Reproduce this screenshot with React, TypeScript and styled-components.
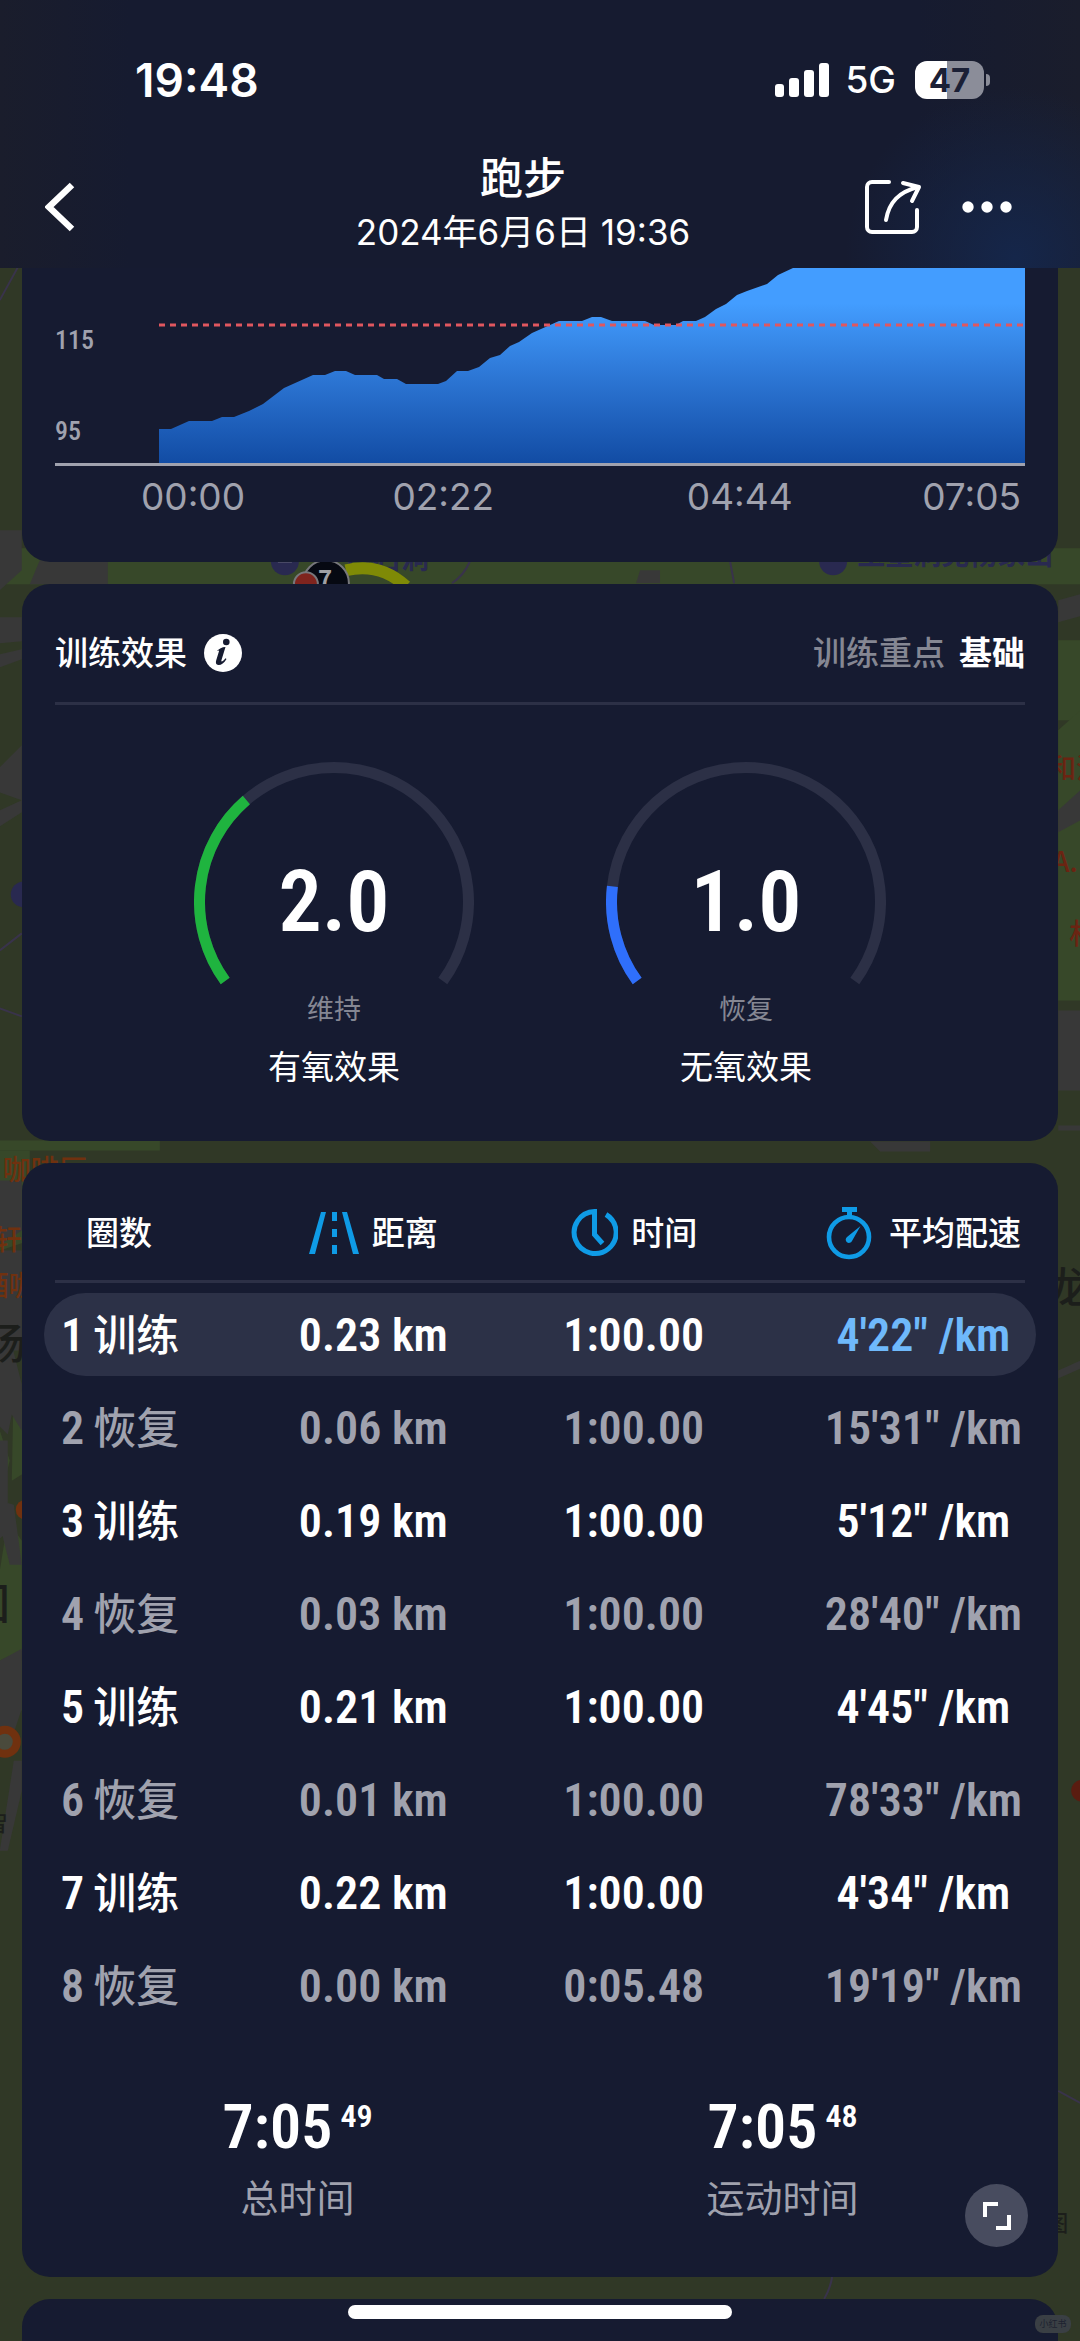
import React from "react";
import styled, { createGlobalStyle } from "styled-components";

const color = {
  page: "#303826",
  card: "#161b31",
  line: "#2c3046",
  pill: "#2c3147",
  text: "#ffffff",
  muted: "#a0a2ae",
  faint: "#858793",
  accent: "#0f9be6",
  pace: "#6fb9fb",
};

const sans = `Inter, "Noto Sans CJK SC", sans-serif`;
const narrow = `"Noto Sans ExtraCondensed", "Liberation Sans Narrow", "Roboto Condensed", Roboto, "Noto Sans CJK SC", sans-serif`;

const GlobalStyle = createGlobalStyle`
  * { box-sizing: border-box; }
  body {
    margin: 0;
    background: ${color.page};
    color: ${color.text};
    font-family: ${sans};
  }
  button {
    border: 0;
    padding: 0;
    background: none;
    color: inherit;
    display: flex;
    align-items: center;
    justify-content: center;
  }
`;

const Screen = styled.div`
  position: relative;
  min-height: 100vh;
  display: flex;
  flex-direction: column;
  overflow: hidden;
  isolation: isolate;
`;

const MapLayer = styled.svg`
  position: absolute;
  inset: 0;
  width: 100%;
  height: 100%;
  z-index: -1;
  font-family: "Noto Sans CJK SC", sans-serif;
`;

/* ---------- header ---------- */

const Header = styled.header`
  background:
    radial-gradient(circle at 94% 96%, #15264a 0, transparent 170px),
    linear-gradient(90deg, #1a1d2c 0, #161b30 12%, #161b30 85%, #1a1d2c 100%);
`;

const StatusBar = styled.div`
  display: flex;
  justify-content: space-between;
  align-items: center;
  height: 140px;
  padding: 20px 90px 0 135px;
`;

const Clock = styled.time`
  font-size: 46px;
  font-weight: 600;
  line-height: 56px;
`;

const StatusIcons = styled.div`
  display: flex;
  align-items: center;
`;

const Network = styled.span`
  margin: 0 19px 0 16px;
  font-size: 37px;
  font-weight: 500;
  line-height: 44px;
`;

const Battery = styled.span`
  width: 69px;
  height: 38px;
  border-radius: 12px;
  background: linear-gradient(90deg, #ffffff 47%, #8b8d99 47%);
  color: #1b2036;
  font-size: 33px;
  font-weight: 700;
  line-height: 38px;
  text-align: center;
`;

const BatteryTip = styled.span`
  width: 4px;
  height: 12px;
  margin-left: 2px;
  border-radius: 0 6px 6px 0;
  background: #8b8d99;
`;

const NavBar = styled.nav`
  display: grid;
  grid-template-columns: 180px 1fr 214px;
  height: 128px;
  align-items: center;
`;

const BackButton = styled.button`
  width: 60px;
  height: 60px;
  margin: 6px 0 0 30px;
`;

const TitleBlock = styled.div`
  padding-bottom: 4px;
  text-align: center;
`;

const Title = styled.h1`
  margin: 0;
  font-size: 43px;
  font-weight: 500;
  line-height: 56px;
`;

const Subtitle = styled.p`
  margin: 4px 0 0;
  font-size: 35px;
  line-height: 44px;
  white-space: nowrap;
`;

const Actions = styled.div`
  display: flex;
  justify-content: flex-end;
  gap: 40px;
  padding: 6px 68px 0 0;
`;

/* ---------- cards ---------- */

const Card = styled.section`
  margin: 0 22px 22px;
  border-radius: 28px;
  background: ${color.card};
`;

const ChartCard = styled(Card)`
  border-radius: 0 0 28px 28px;
  padding: 0 33px 43px;
`;

const PlotRow = styled.div`
  display: grid;
  grid-template-columns: 104px 1fr;
  border-bottom: 3px solid ${color.muted};
`;

const YAxis = styled.div`
  display: flex;
  flex-direction: column;
  justify-content: flex-end;
  gap: 63px;
  padding-bottom: 18px;
  color: ${color.muted};
  font-family: ${narrow};
  font-size: 26px;
  font-weight: 500;
  line-height: 28px;
`;

const Plot = styled.svg`
  display: block;
  width: 100%;
  height: 195px;
`;

const XAxis = styled.div`
  display: grid;
  grid-template-columns: 251fr 294fr 235fr auto;
  padding: 9px 4px 0 86px;
  color: ${color.muted};
  font-size: 37px;
  line-height: 44px;
`;

const EffectCard = styled(Card)`
  padding: 0 33px 50px;
`;

const CardHeader = styled.div`
  display: flex;
  justify-content: space-between;
  align-items: center;
  height: 121px;
  padding-top: 19px;
  border-bottom: 3px solid ${color.line};
  font-size: 33px;
`;

const CardTitle = styled.h2`
  display: flex;
  align-items: center;
  gap: 17px;
  margin: 0;
  font-size: 33px;
  font-weight: 500;
  line-height: 48px;
`;

const Focus = styled.p`
  display: flex;
  gap: 14px;
  margin: 0;
  color: ${color.faint};
  font-weight: 500;
  line-height: 48px;

  strong {
    color: ${color.text};
    font-weight: 700;
  }
`;

const Gauges = styled.div`
  display: flex;
  justify-content: center;
  gap: 132px;
  padding-top: 57px;
`;

const GaugeItem = styled.figure`
  width: 280px;
  margin: 0;
  text-align: center;
`;

const Dial = styled.div`
  display: grid;
  height: 226px;

  > * {
    grid-area: 1 / 1;
  }
`;

const DialValue = styled.span`
  align-self: center;
  padding-top: 54px;
  font-family: ${narrow};
  font-size: 86px;
  font-weight: 600;
  line-height: 96px;
`;

const DialLevel = styled.p`
  margin: 0;
  padding-top: 2px;
  color: ${color.faint};
  font-size: 27px;
  line-height: 40px;
`;

const DialCaption = styled.figcaption`
  margin-top: 13px;
  font-size: 33px;
  line-height: 48px;
`;

/* ---------- laps ---------- */

const LapCard = styled(Card)`
  padding: 0 22px 51px;
`;

const LapTable = styled.table`
  width: 100%;
  table-layout: fixed;
  border-collapse: separate;
  border-spacing: 0 10px;
`;

const LapHead = styled.thead`
  tr {
    position: relative;
  }

  tr::after {
    content: "";
    position: absolute;
    left: 11px;
    right: 11px;
    bottom: 0;
    height: 3px;
    background: ${color.line};
  }
`;

const HeadCell = styled.th<{ $width: string; $start?: boolean }>`
  width: ${(p) => p.$width};
  height: 110px;
  padding: ${(p) => (p.$start ? "10px 0 0 42px" : "10px 0 0")};
  text-align: ${(p) => (p.$start ? "left" : "center")};
  font-size: 33px;
  font-weight: 500;
  line-height: 48px;
  white-space: nowrap;
`;

const HeadLabel = styled.span<{ $gap: number }>`
  display: flex;
  align-items: center;
  justify-content: center;
  gap: ${(p) => p.$gap}px;
`;

const LapRow = styled.tr<{ $rest: boolean; $best: boolean }>`
  color: ${(p) => (p.$rest ? color.muted : color.text)};

  td {
    height: 83px;
    padding: 0;
    background: ${(p) => (p.$best ? color.pill : "transparent")};
    font-family: ${narrow};
    font-size: 46px;
    font-weight: 600;
    line-height: 56px;
    text-align: center;
    white-space: nowrap;
  }

  td:first-child {
    padding-left: 17px;
    border-radius: 42px 0 0 42px;
    text-align: left;
  }

  td:last-child {
    border-radius: 0 42px 42px 0;
    color: ${(p) => (p.$best ? color.pace : "inherit")};
  }
`;

const LapKind = styled.span`
  margin-left: 9px;
  font-family: ${sans};
  font-size: 43px;
  font-weight: 500;
`;

const Totals = styled.dl`
  display: grid;
  grid-template-columns: 1fr 1fr;
  margin: 0;
  padding: 54px 11px 0;
  text-align: center;
`;

const Total = styled.div`
  display: flex;
  flex-direction: column-reverse;
`;

const TotalValue = styled.dd`
  display: flex;
  justify-content: center;
  gap: 8px;
  margin: 0;
  font-family: ${narrow};
  font-size: 62px;
  font-weight: 600;
  line-height: 72px;

  small {
    font-size: 32px;
    line-height: 50px;
  }
`;

const TotalLabel = styled.dt`
  margin-top: 7px;
  color: ${color.muted};
  font-size: 38px;
  font-weight: 400;
  line-height: 56px;
`;

const NextCard = styled(Card)`
  flex: 1;
  min-height: 43px;
  margin-bottom: 0;
  border-radius: 28px 28px 0 0;
`;

const ExpandButton = styled.button`
  position: fixed;
  right: 52px;
  bottom: 94px;
  width: 63px;
  height: 63px;
  border-radius: 50%;
  background: #484c5f;
`;

const HomeIndicator = styled.div`
  position: fixed;
  left: 50%;
  bottom: 22px;
  width: 384px;
  height: 14px;
  border-radius: 7px;
  background: #ffffff;
  transform: translateX(-50%);
`;

const Watermark = styled.span`
  position: fixed;
  right: 9px;
  bottom: 8px;
  width: 36px;
  border-radius: 8px;
  background: #3a3f44;
  color: #1d2230;
  font-size: 9px;
  line-height: 18px;
  text-align: center;
`;

/* ---------- data ---------- */

const laps = [
  { kind: "训练", distance: "0.23", time: "1:00.00", pace: `4'22"` },
  { kind: "恢复", distance: "0.06", time: "1:00.00", pace: `15'31"` },
  { kind: "训练", distance: "0.19", time: "1:00.00", pace: `5'12"` },
  { kind: "恢复", distance: "0.03", time: "1:00.00", pace: `28'40"` },
  { kind: "训练", distance: "0.21", time: "1:00.00", pace: `4'45"` },
  { kind: "恢复", distance: "0.01", time: "1:00.00", pace: `78'33"` },
  { kind: "训练", distance: "0.22", time: "1:00.00", pace: `4'34"` },
  { kind: "恢复", distance: "0.00", time: "0:05.48", pace: `19'19"` },
];

const heartRate =
  "0,161 12,161 30,153 53,153 63,149 75,149 90,143 104,136 125,120 154,107 166,107 176,103 187,103 196,107 218,107 225,111 238,111 247,116 279,116 287,113 298,103 309,103 320,99 331,90 341,87 351,78 360,74 373,65 400,53 423,53 433,49 442,49 453,53 486,53 495,57 517,57 524,53 537,53 546,49 557,41 567,36 578,27 588,23 608,16 619,7 634,0";

/* ---------- drawings ---------- */

const SignalIcon = () => (
  <svg width="54" height="34" viewBox="0 0 54 34" fill="#fff" aria-hidden="true">
    <rect x="0" y="21" width="9" height="13" rx="3" />
    <rect x="14" y="15" width="10" height="19" rx="3" />
    <rect x="29" y="7" width="10" height="27" rx="3" />
    <rect x="44" y="0" width="10" height="34" rx="3" />
  </svg>
);

const BackIcon = () => (
  <svg width="30" height="50" viewBox="0 0 30 50" fill="none" aria-hidden="true">
    <path d="M27 3 4 25l23 22" stroke="#fff" strokeWidth="6.5" />
  </svg>
);

const ShareIcon = () => (
  <svg width="58" height="56" viewBox="0 0 58 56" fill="none" stroke="#fff" strokeWidth="4" strokeLinecap="round" strokeLinejoin="round" aria-hidden="true">
    <path d="M25 3H8a5 5 0 0 0-5 5v40a5 5 0 0 0 5 5h40a5 5 0 0 0 5-5V31" />
    <path d="M22 41c3-18 13-28 32-33" />
    <path d="M39 4l16 4-7 14" />
  </svg>
);

const MoreIcon = () => (
  <svg width="50" height="56" viewBox="0 0 50 56" fill="#fff" aria-hidden="true">
    <circle cx="6" cy="28" r="5.7" />
    <circle cx="25" cy="28" r="5.7" />
    <circle cx="44" cy="28" r="5.7" />
  </svg>
);

const InfoIcon = () => (
  <svg width="38" height="38" viewBox="0 0 38 38" aria-hidden="true">
    <circle cx="19" cy="19" r="19" fill="#fff" />
    <circle cx="22.3" cy="8" r="3.3" fill={color.card} />
    <path d="M13 17c2-2 5-4 8.500-4l-4 13c-.7 2.400 1 1.800 4-1.800l1 .8c-2.500 4.200-5.500 6.200-8 6-2.600-.2-3-2.400-2.200-5l2.600-8.400c.5-1.600-.3-1.400-1.500-.6z" fill={color.card} />
  </svg>
);

const RoadIcon = () => (
  <svg width="50" height="42" viewBox="0 0 50 42" fill={color.accent} aria-hidden="true">
    <path d="M12 0h5L6 42H0zM33 0h5l12 42h-6zM23 0h5v9h-5zM23 17h5v8h-5zM23 33h5v9h-5z" />
  </svg>
);

const ClockIcon = () => (
  <svg width="48" height="50" viewBox="0 0 48 50" fill="none" stroke={color.accent} strokeWidth="5" aria-hidden="true">
    <path d="M36 6.500A21 21 0 1 1 24.500 3.500v23l8 9" />
  </svg>
);

const StopwatchIcon = () => (
  <svg width="46" height="53" viewBox="0 0 46 53" aria-hidden="true">
    <circle cx="23" cy="30" r="20" fill="none" stroke={color.accent} strokeWidth="4.600" />
    <path d="M16 0h15v5h-5v6h-5V5h-5z" fill={color.accent} />
    <path d="M34.500 19 26 34a3.300 3.300 0 1 1-5-4z" fill={color.accent} />
  </svg>
);

const ExpandIcon = () => (
  <svg width="30" height="30" viewBox="0 0 30 30" fill="none" stroke="#fff" strokeWidth="4" aria-hidden="true">
    <path d="M3 16V3h13M27 14v13H14" />
  </svg>
);

const polar = (angle: number) => {
  const rad = (angle * Math.PI) / 180;
  return `${140 - 134.5 * Math.cos(rad)} ${140 - 134.5 * Math.sin(rad)}`;
};

const arc = (sweep: number) =>
  `M${polar(-36)}A134.5 134.5 0 ${sweep > 180 ? 1 : 0} 1 ${polar(sweep - 36)}`;

type GaugeProps = { value: number; stroke: string; level: string; label: string };

const Gauge = ({ value, stroke, level, label }: GaugeProps) => (
  <GaugeItem>
    <Dial>
      <svg width="280" height="226" viewBox="0 0 280 226" fill="none" strokeWidth="11" aria-hidden="true">
        <path d={arc(252)} stroke={color.line} />
        <path d={arc((value / 6) * 256)} stroke={stroke} />
      </svg>
      <DialValue>{value.toFixed(1)}</DialValue>
    </Dial>
    <DialLevel>{level}</DialLevel>
    <DialCaption>{label}</DialCaption>
  </GaugeItem>
);

const MapBackdrop = () => (
  <MapLayer viewBox="0 0 1080 2341" preserveAspectRatio="xMidYMin slice" aria-hidden="true">
    <g fill="#374829">
      <path d="M0 548h1080v36H0zM1058 640h22v80h-22zM0 1140h160v10H0z" />
      <path d="M1058 730l22-20v290h-22zM0 1150h30v90l-30 10zM14 1380l14 20v70l-16 10zM0 1430l10 30-10 40zM8 1520l14 20v110l-22 10v-90zM0 1660h22v50H0z" />
    </g>
    <g fill="#383838">
      <path d="M0 530h22v40l-22 20zM40 560h68v24H30zM0 617h22v24l-22 2zM0 654l22-5v10l-22 8zM22 745v55l-22-8v-25zM0 810l22-10v12L0 826z" />
      <path d="M0 1180h22v50l-22 15zM0 1250h22v100H0zM0 1350l12-6 10 40v46l-10-16-4 20-8-8zM0 1440h8v90l-8 8zM0 1500l14 4 8 60H10l-10-40zM0 1660l22-12v60l-10 30H0zM14 1760h8v30l-14 60H0z" />
      <path d="M640 570h20v13h-24zM870 1141h60v10h-50zM1058 600l22-6v22l-22 6zM1058 810l22-20v30l-22 12zM1058 1010h22v80h-22zM1058 1125h22v5h-22zM1058 1370l22-10v8l-22 10z" />
    </g>
    <g fill="none" stroke="#39334b" strokeWidth="2">
      <path d="M832 2276q-2 12-8 22M1058 2090l22 12M0 950l22-17M0 1008l22 8M0 300l22-40M470 561q-6 14-18 22M730 561l4 22" />
    </g>
    <g fill="#292950">
      <circle cx="285" cy="561" r="14" />
      <circle cx="833" cy="561" r="14" />
      <circle cx="24" cy="894" r="13" />
      <text x="345" y="569" fontSize="28" fontWeight="700">白石洞</text>
      <text x="857" y="565" fontSize="28" fontWeight="700">玉皇洞党杨家山</text>
    </g>
    <path d="M278 561h14" stroke="#56566f" strokeWidth="3" />
    <path d="M346 570q34-8 60 16" fill="none" stroke="#7f8a06" strokeWidth="12" />
    <circle cx="326" cy="583" r="23" fill="#060912" stroke="#77777c" strokeWidth="2" />
    <text x="318" y="588" fontSize="24" fontWeight="700" fill="#a0a0a4">7</text>
    <circle cx="306" cy="584" r="12" fill="#7f241e" stroke="#77777c" strokeWidth="2" />
    <g fill="#70310f" fontSize="28" fontWeight="500">
      <text x="3" y="1179">咖啡厅</text>
      <text x="-6" y="1249">轩</text>
      <text x="-19" y="1295">酒咖</text>
      <circle cx="26" cy="1509" r="10" />
      <circle cx="5" cy="1741" r="16" />
      <circle cx="1082" cy="1790" r="11" fill="#5a1c10" />
      <text x="1048" y="779" fill="#6b2412">和河</text>
      <text x="1052" y="872" fill="#6b2412">A.I</text>
      <text x="1069" y="944" fill="#6b2412">村</text>
    </g>
    <circle cx="5" cy="1741" r="8" fill="#4a4a3c" />
    <g fill="#1c1e1b" fontWeight="500">
      <text x="-16" y="1358" fontSize="42">杨</text>
      <text x="1046" y="1302" fontSize="42">龙</text>
      <text x="-32" y="1618" fontSize="42">回</text>
      <text x="-14" y="1830" fontSize="22">智</text>
      <text x="1046" y="2230" fontSize="22">图</text>
    </g>
  </MapLayer>
);

export default function App() {
  return (
    <Screen>
      <GlobalStyle />
      <MapBackdrop />

      <Header>
        <StatusBar>
          <Clock>19:48</Clock>
          <StatusIcons>
            <SignalIcon />
            <Network>5G</Network>
            <Battery>47</Battery>
            <BatteryTip />
          </StatusIcons>
        </StatusBar>
        <NavBar>
          <BackButton type="button" aria-label="返回">
            <BackIcon />
          </BackButton>
          <TitleBlock>
            <Title>跑步</Title>
            <Subtitle>2024年6月6日 19:36</Subtitle>
          </TitleBlock>
          <Actions>
            <button type="button" aria-label="分享">
              <ShareIcon />
            </button>
            <button type="button" aria-label="更多">
              <MoreIcon />
            </button>
          </Actions>
        </NavBar>
      </Header>

      <ChartCard>
        <PlotRow>
          <YAxis>
            <span>115</span>
            <span>95</span>
          </YAxis>
          <Plot viewBox="0 0 866 195" preserveAspectRatio="none" aria-hidden="true">
            <defs>
              <linearGradient id="heart-fill" x1="0" y1="0" x2="0" y2="195" gradientUnits="userSpaceOnUse">
                <stop offset="0.18" stopColor="#439dff" />
                <stop offset="0.6" stopColor="#2a72d0" />
                <stop offset="1" stopColor="#124ca4" />
              </linearGradient>
            </defs>
            <polygon points={`${heartRate} 866,0 866,195 0,195`} fill="url(#heart-fill)" />
            <line x1="0" y1="57" x2="866" y2="57" stroke="#e0575f" strokeWidth="3" strokeDasharray="6 5" />
          </Plot>
        </PlotRow>
        <XAxis>
          <span>00:00</span>
          <span>02:22</span>
          <span>04:44</span>
          <span>07:05</span>
        </XAxis>
      </ChartCard>

      <EffectCard>
        <CardHeader>
          <CardTitle>
            训练效果
            <button type="button" aria-label="说明">
              <InfoIcon />
            </button>
          </CardTitle>
          <Focus>
            训练重点 <strong>基础</strong>
          </Focus>
        </CardHeader>
        <Gauges>
          <Gauge value={2} stroke="#1fb43f" level="维持" label="有氧效果" />
          <Gauge value={1} stroke="#2f6ffb" level="恢复" label="无氧效果" />
        </Gauges>
      </EffectCard>

      <LapCard>
        <LapTable>
          <LapHead>
            <tr>
              <HeadCell scope="col" $width="24.8%" $start>
                圈数
              </HeadCell>
              <HeadCell scope="col" $width="16.8%">
                <HeadLabel $gap={13}>
                  <RoadIcon />
                  距离
                </HeadLabel>
              </HeadCell>
              <HeadCell scope="col" $width="35.7%">
                <HeadLabel $gap={13}>
                  <ClockIcon />
                  时间
                </HeadLabel>
              </HeadCell>
              <HeadCell scope="col" $width="22.7%">
                <HeadLabel $gap={17}>
                  <StopwatchIcon />
                  平均配速
                </HeadLabel>
              </HeadCell>
            </tr>
          </LapHead>
          <tbody>
            {laps.map((lap, i) => (
              <LapRow key={i} $rest={lap.kind === "恢复"} $best={i === 0}>
                <td>
                  {i + 1}
                  <LapKind>{lap.kind}</LapKind>
                </td>
                <td>{lap.distance} km</td>
                <td>{lap.time}</td>
                <td>{lap.pace} /km</td>
              </LapRow>
            ))}
          </tbody>
        </LapTable>
        <Totals>
          <Total>
            <TotalLabel>总时间</TotalLabel>
            <TotalValue>
              7:05<small>49</small>
            </TotalValue>
          </Total>
          <Total>
            <TotalLabel>运动时间</TotalLabel>
            <TotalValue>
              7:05<small>48</small>
            </TotalValue>
          </Total>
        </Totals>
      </LapCard>

      <NextCard />

      <ExpandButton type="button" aria-label="全屏">
        <ExpandIcon />
      </ExpandButton>
      <HomeIndicator />
      <Watermark>小红书</Watermark>
    </Screen>
  );
}
